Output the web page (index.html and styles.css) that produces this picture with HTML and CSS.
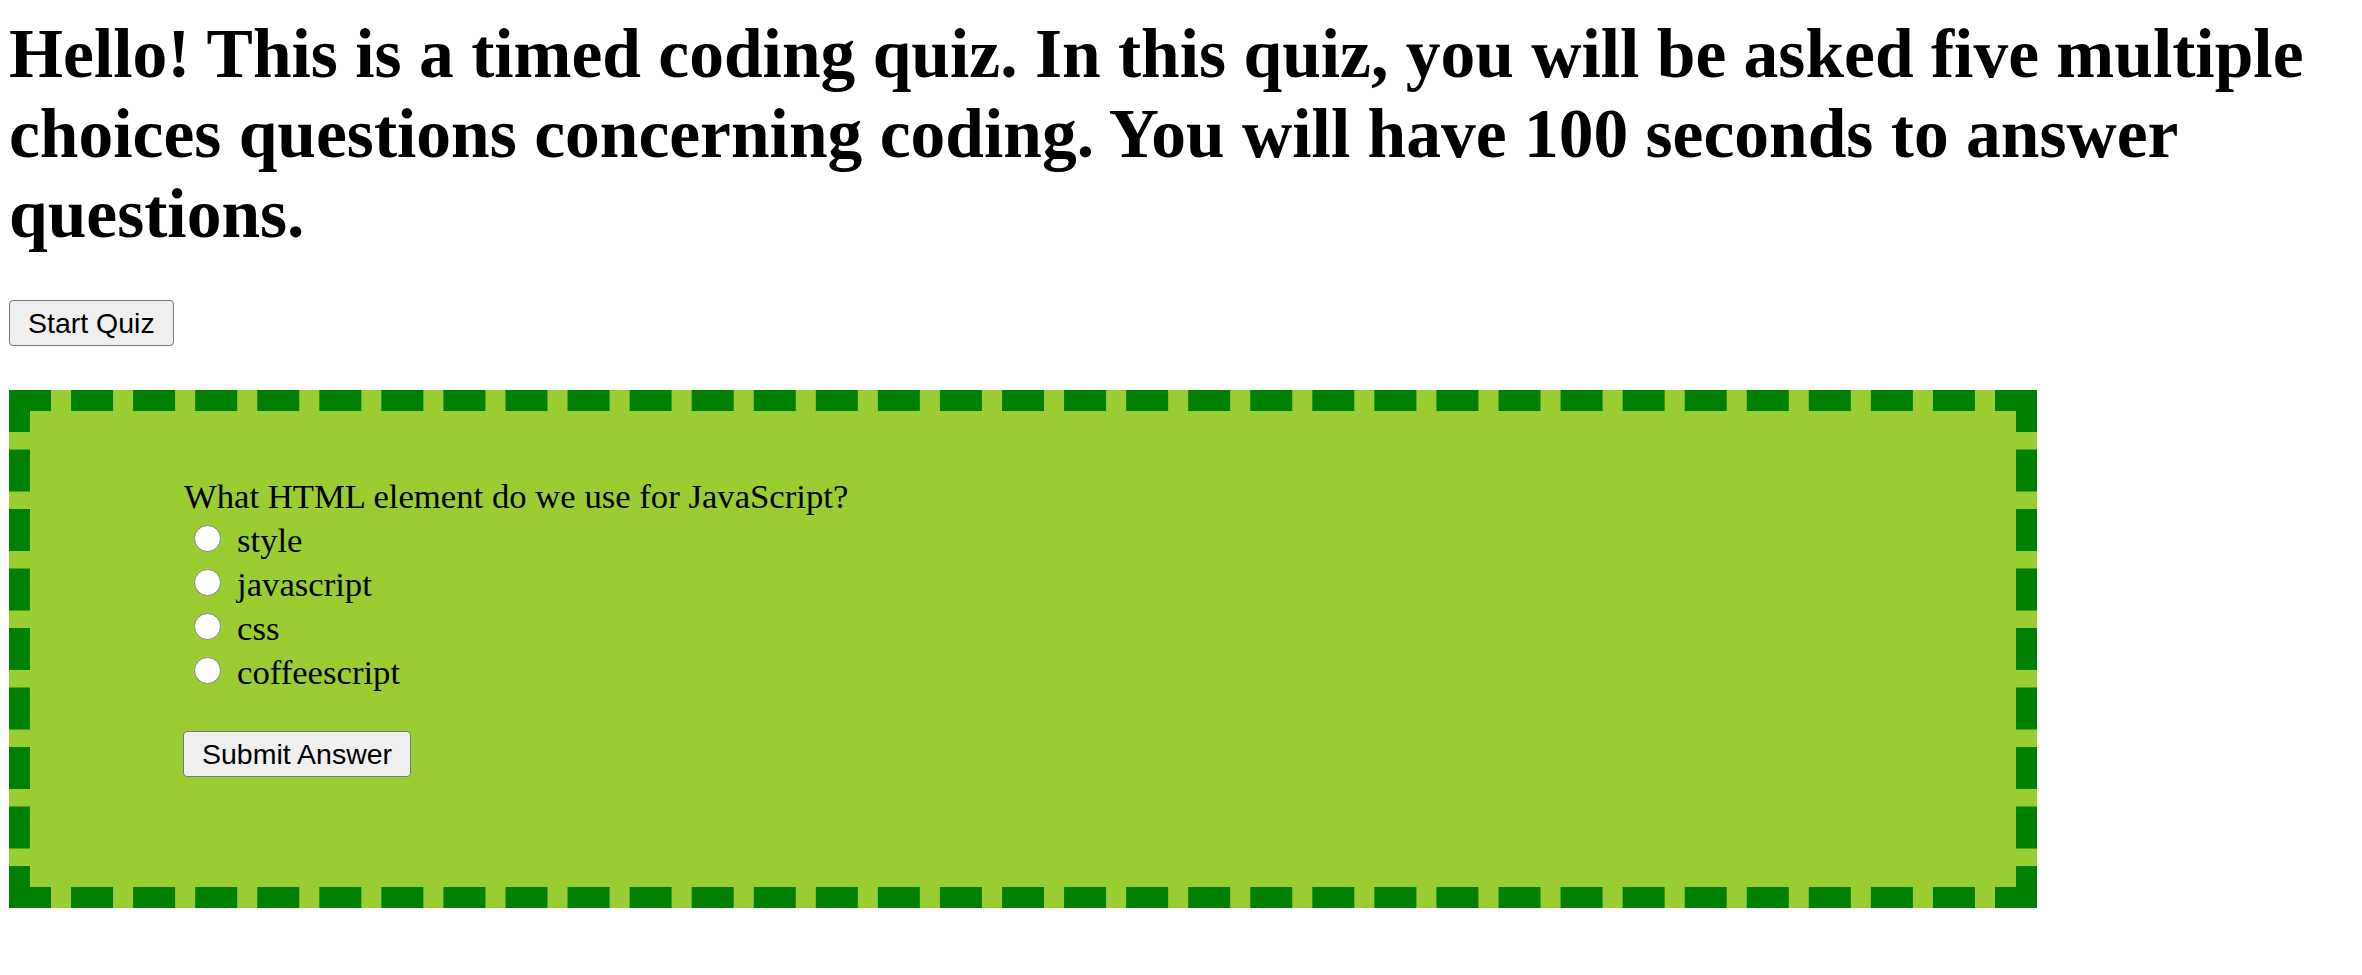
FILE: index.html
```html
<!DOCTYPE html>
<html lang="en">
<head>
<meta charset="utf-8">
<title>Coding Quiz</title>
<link rel="stylesheet" href="styles.css">
</head>
<body>
  <h1 class="intro">Hello! This is a timed coding quiz. In this quiz, you will be asked five multiple choices questions concerning coding. You will have 100 seconds to answer questions.</h1>
  <div class="start-row">
    <button class="btn" type="button">Start Quiz</button>
  </div>
  <div class="quiz">
    <div class="question">What HTML element do we use for JavaScript?</div>
    <label class="option"><input class="radio" type="radio" name="answer"><span class="option-text">style</span></label>
    <label class="option"><input class="radio" type="radio" name="answer"><span class="option-text">javascript</span></label>
    <label class="option"><input class="radio" type="radio" name="answer"><span class="option-text">css</span></label>
    <label class="option"><input class="radio" type="radio" name="answer"><span class="option-text">coffeescript</span></label>
    <div class="submit-row">
      <button class="btn" type="button">Submit Answer</button>
    </div>
  </div>
</body>
</html>
```
FILE: styles.css
```css
html, body {
  background: #ffffff;
}

body {
  margin: 0;
  padding: 0 9px;
  font-family: "Liberation Serif", "Times New Roman", serif;
  color: #000000;
}

.intro {
  margin: 14px 0 46px;
  font-family: "Liberation Serif", "Times New Roman", serif;
  font-weight: bold;
  font-size: 69.5px;
  line-height: 80px;
}

.start-row {
  display: flex;
  margin-bottom: 44px;
}

.btn {
  font-family: "Liberation Sans", Arial, sans-serif;
  font-size: 28.5px;
  line-height: 34px;
  padding: 5px 18px;
  margin: 0;
  color: #000000;
  background: #efefef;
  border: 1px solid #767676;
  border-radius: 4px;
}

.quiz {
  box-sizing: border-box;
  width: 2028px;
  display: flex;
  flex-direction: column;
  align-items: flex-start;
  padding: 64px 0 110px 153px;
  background: #9acd32;
  border: 21px dashed #008000;
}

.question {
  font-size: 34.7px;
  line-height: 44px;
  padding-left: 1px;
}

.option {
  display: flex;
  align-items: flex-start;
  height: 44px;
}

.radio {
  appearance: none;
  -webkit-appearance: none;
  box-sizing: border-box;
  width: 27px;
  height: 27px;
  margin: 6px 0 0 11px;
  border: 1.5px solid #858585;
  border-radius: 50%;
  background: #ffffff;
}

.option-text {
  font-size: 34.7px;
  line-height: 44px;
  margin-left: 16px;
}

.submit-row {
  display: flex;
  margin-top: 36px;
}
```
